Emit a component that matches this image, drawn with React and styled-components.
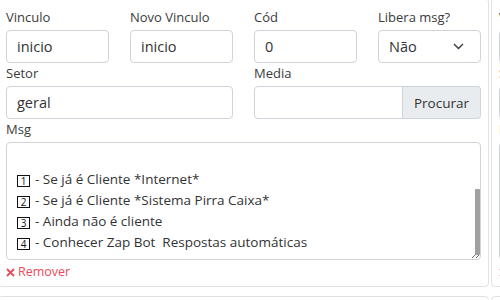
import React, { useEffect, useRef } from 'react'
import styled, { createGlobalStyle } from 'styled-components'

const GlobalStyle = createGlobalStyle`
  html, body { margin: 0; padding: 0; background: #fff; overflow: hidden; }
  body { font-family: "Open Sans", "Noto Sans", Arial, sans-serif; color: #212529; }
  * { box-sizing: border-box; }
`

// the page is scrolled: the first card's top and left edges sit just outside the view
const Board = styled.div`
  display: grid;
  grid-template-columns: repeat(2, 491px);
  column-gap: 2px;
  row-gap: 9px;
  margin: -2px 0 0 -2px;
  width: max-content;
`

const Card = styled.section`
  border: 1px solid #dee2e6;
  border-radius: 4px;
  padding: 8px 7px 4px;
  background: #fff;
`

const FormGrid = styled.div`
  display: grid;
  grid-template-columns: repeat(4, 1fr);
  column-gap: 21px;
`

const Field = styled.div`
  grid-column: span ${(p) => p.span || 1};
  display: flex;
  flex-direction: column;
  min-width: 0;
`

const Label = styled.label`
  font-size: 13px;
  line-height: 21px;
  color: #3b3b3b;
  margin-bottom: 2px;
`

const Input = styled.input`
  width: 100%;
  height: 33px;
  border: 1px solid #ced4da;
  border-radius: ${(p) => (p.grouped ? '4px 0 0 4px' : '4px')};
  padding: 0 10px;
  font-family: inherit;
  font-size: 14.5px;
  color: #333;
  background: #fff;
  outline: none;
`

const SelectWrap = styled.div`
  position: relative;
`

const Select = styled.select`
  width: 100%;
  height: 33px;
  border: 1px solid #ced4da;
  border-radius: 4px;
  padding: 0 10px;
  font-family: inherit;
  font-size: 14.5px;
  color: #333;
  background: #fff;
  appearance: none;
  outline: none;
`

const Chevron = styled.svg`
  position: absolute;
  right: 17px;
  top: 13px;
  pointer-events: none;
`

const Group = styled.div`
  display: flex;
`

const GroupButton = styled.button`
  flex: none;
  height: 33px;
  padding: 0 11px;
  border: 1px solid #ced4da;
  border-left: none;
  border-radius: 0 4px 4px 0;
  background: #e9ecef;
  font-family: inherit;
  font-size: 13.5px;
  color: #333;
`

const MsgFrame = styled.div`
  position: relative;
`

const MsgBox = styled.div`
  height: 118px;
  border: 1px solid #ced4da;
  border-radius: 4px;
  padding: 6px 10px;
  font-size: 13.5px;
  line-height: 21px;
  color: #333;
  overflow: hidden;
  white-space: pre;
  resize: vertical;
`

// scrollbar thumb drawn over the message box, as the browser shows it
const Thumb = styled.div`
  position: absolute;
  right: 1px;
  top: 47px;
  width: 5px;
  height: 66px;
  border-radius: 1px;
  background: #a0a0a0;
`

const Key = styled.span`
  display: inline-block;
  width: 13px;
  height: 12px;
  border: 1px solid #111;
  font-size: 10px;
  line-height: 10px;
  text-align: center;
  color: #111;
  margin-right: 5px;
  vertical-align: -1px;
`

const RemoveLink = styled.a`
  display: flex;
  align-items: center;
  gap: 3px;
  margin-top: 2px;
  font-size: 12.5px;
  line-height: 20px;
  color: #ea4a5a;
  cursor: pointer;
`

const intro = ['Olá, tudo bem?', '*Bem-vindo(a) à Pirra!*', 'Escolha uma opção:', '', '']
const options = [
  'Se já é Cliente *Internet*',
  'Se já é Cliente *Sistema Pirra Caixa*',
  'Ainda não é cliente',
  'Conhecer Zap Bot  Respostas automáticas',
]

const Message = () => {
  const ref = useRef(null)
  useEffect(() => {
    if (ref.current) ref.current.scrollTop = ref.current.scrollHeight
  }, [])
  return (
    <MsgFrame>
      <MsgBox ref={ref}>
        {intro.map((line, i) => (
          <div key={'i' + i}>{line || '\u00a0'}</div>
        ))}
        {options.map((text, i) => (
          <div key={'o' + i}>
            <Key>{i + 1}</Key>- {text}
          </div>
        ))}
      </MsgBox>
      <Thumb />
    </MsgFrame>
  )
}

const VinculoCard = () => (
  <Card>
    <FormGrid>
      <Field>
        <Label>Vinculo</Label>
        <Input defaultValue="inicio" />
      </Field>
      <Field>
        <Label>Novo Vinculo</Label>
        <Input defaultValue="inicio" />
      </Field>
      <Field>
        <Label>Cód</Label>
        <Input defaultValue="0" />
      </Field>
      <Field>
        <Label>Libera msg?</Label>
        <SelectWrap>
          <Select defaultValue="nao">
            <option value="nao">Não</option>
            <option value="sim">Sim</option>
          </Select>
          <Chevron width="11" height="7" viewBox="0 0 11 7">
            <path d="M1 1l4.5 4.5L10 1" fill="none" stroke="#343a40" strokeWidth="1.4" />
          </Chevron>
        </SelectWrap>
      </Field>
      <Field span={2}>
        <Label>Setor</Label>
        <Input defaultValue="geral" />
      </Field>
      <Field span={2}>
        <Label>Media</Label>
        <Group>
          <Input grouped />
          <GroupButton>Procurar</GroupButton>
        </Group>
      </Field>
      <Field span={4}>
        <Label>Msg</Label>
        <Message />
      </Field>
    </FormGrid>
    <RemoveLink>
      <svg width="9" height="9" viewBox="0 0 9 9">
        <path d="M1 1l7 7M8 1L1 8" stroke="#ea4a5a" strokeWidth="1.8" />
      </svg>
      Remover
    </RemoveLink>
  </Card>
)

export default function App() {
  return (
    <>
      <GlobalStyle />
      <Board>
        <VinculoCard />
        <VinculoCard />
        <VinculoCard />
        <VinculoCard />
      </Board>
    </>
  )
}
